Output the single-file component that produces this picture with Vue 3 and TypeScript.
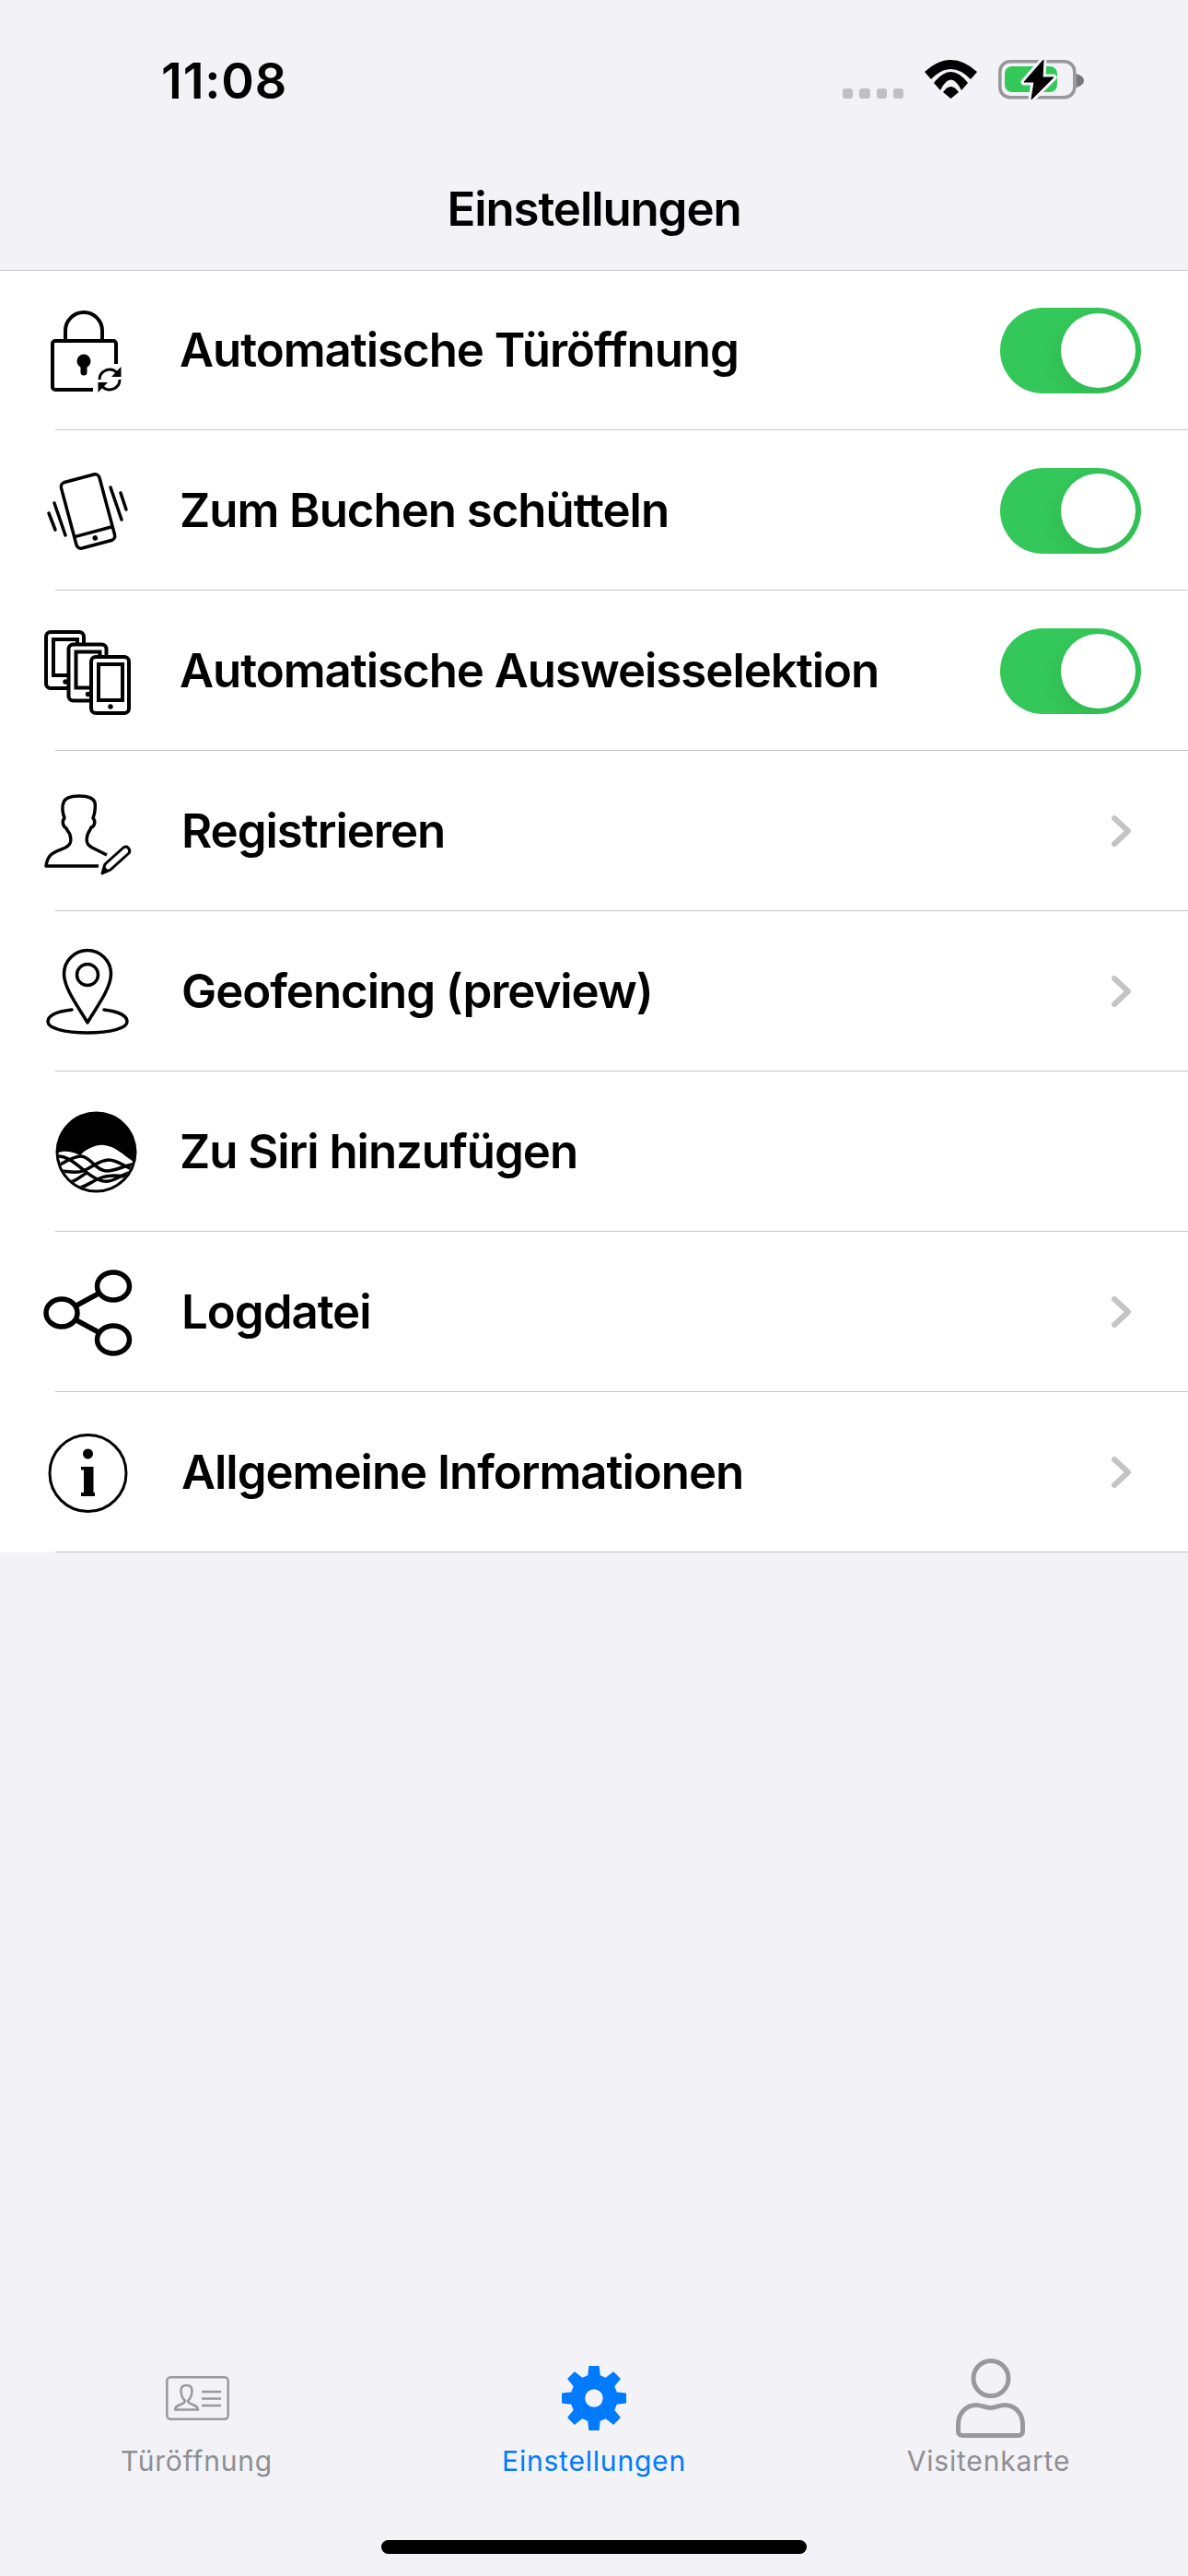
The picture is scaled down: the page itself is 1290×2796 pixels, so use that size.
<script setup lang="ts">
type RowKind = "switch" | "link" | "plain";

interface SettingRow {
  label: string;
  icon: string;
  kind: RowKind;
}

const rows: SettingRow[] = [
  { label: "Automatische Türöffnung", icon: "lock", kind: "switch" },
  { label: "Zum Buchen schütteln", icon: "shake", kind: "switch" },
  { label: "Automatische Ausweisselektion", icon: "cards", kind: "switch" },
  { label: "Registrieren", icon: "register", kind: "link" },
  { label: "Geofencing (preview)", icon: "pin", kind: "link" },
  { label: "Zu Siri hinzufügen", icon: "siri", kind: "plain" },
  { label: "Logdatei", icon: "share", kind: "link" },
  { label: "Allgemeine Informationen", icon: "info", kind: "link" },
];

// three overlapping phones, each one shifted down and right
const phoneOffsets = [
  { x: 0, y: 0 },
  { x: 24.5, y: 13.5 },
  { x: 49, y: 27 },
];

const buildGear = (cx: number, cy: number) => {
  const teeth = 8;
  const parts: string[] = [];
  const point = (r: number, deg: number) => {
    const a = (deg * Math.PI) / 180;
    return `${(cx + r * Math.sin(a)).toFixed(2)} ${(cy - r * Math.cos(a)).toFixed(2)}`;
  };
  for (let i = 0; i < teeth; i++) {
    const mid = (i * 360) / teeth;
    parts.push(
      `${i === 0 ? "M" : "L"}${point(25, mid - 14)}`,
      `L${point(35, mid - 8)}`,
      `L${point(35, mid + 8)}`,
      `L${point(25, mid + 14)}`,
    );
  }
  parts.push("Z");
  // centre hole
  parts.push(`M${cx - 10.5} ${cy}a10.5 10.5 0 1 0 21 0a10.5 10.5 0 1 0 -21 0Z`);
  return parts.join(" ");
};

const gearPath = buildGear(35, 35);
</script>

<template>
  <div class="page">
    <header class="top">
      <div class="status">
        <span class="time">11:08</span>
        <div class="status-icons">
          <div class="signal">
            <i v-for="n in 4" :key="n"></i>
          </div>
          <svg width="57" height="42" viewBox="0 0 57 42">
            <path d="M0 13Q28.500 -13 57 13L50 21Q28.500 -1 7 21Z" />
            <path d="M10 25Q28.500 1 47 25L40 33Q28.500 10 17 33Z" />
            <path d="M20 35Q28.500 23 37 35L28.500 42Z" />
          </svg>
          <svg class="battery" width="93" height="46" viewBox="0 0 93 46">
            <rect x="1.800" y="3.800" width="81" height="39" rx="11" fill="none" stroke="#98989c" stroke-width="3.500" />
            <rect x="7" y="9" width="57" height="28" rx="8" fill="#34c759" />
            <path d="M84.500 17C88 18 93 20 93 24.500C93 29 88 31 84.500 32Z" fill="#77777b" />
            <path d="M49 2L28 26H39L36 45L60 21H48Z" stroke="#f2f2f7" stroke-width="7" stroke-linejoin="round" />
            <path d="M49 2L28 26H39L36 45L60 21H48Z" fill="#000" stroke="#000" stroke-width="1" stroke-linejoin="round" />
          </svg>
        </div>
      </div>
      <h1 class="title">Einstellungen</h1>
    </header>

    <section class="list">
      <div v-for="row in rows" :key="row.label" class="row">
        <svg class="row-icon" width="196" height="174" viewBox="0 0 196 174">
          <g v-if="row.icon === 'lock'" class="line" stroke-width="4">
            <path d="M101 130H60a3 3 0 0 1-3-3V80a3 3 0 0 1 3-3H123a3 3 0 0 1 3 3V102" />
            <path d="M71 76V66a20 20 0 0 1 40 0V76" />
            <circle cx="91" cy="99" r="5.500" class="solid" />
            <path d="M91 100V111" stroke-width="7" stroke-linecap="round" />
            <g stroke-width="3">
              <path d="M108 119A11 11 0 0 1 127 111.500" />
              <path d="M130 119A11 11 0 0 1 111 126.500" />
            </g>
            <path d="M131.500 105V116H121Z" class="solid" stroke="none" />
            <path d="M106.500 133V122H117Z" class="solid" stroke="none" />
          </g>

          <g v-else-if="row.icon === 'shake'" class="line" stroke-width="3.500">
            <g transform="translate(95.500 88) rotate(-15)">
              <rect x="-21.500" y="-37" width="43" height="74" rx="5" />
              <path d="M-21 23H21" />
              <circle cx="0" cy="30" r="2.800" class="solid" stroke="none" />
            </g>
            <path d="M59 79L71 114M53 90L60 108M120 62L132 97M131 68L137 86" stroke-linecap="round" />
          </g>

          <g v-else-if="row.icon === 'cards'" class="line" stroke-width="4">
            <g v-for="(o, i) in phoneOffsets" :key="i" :transform="`translate(${o.x} ${o.y})`">
              <rect x="50" y="45" width="41" height="61" rx="5" fill="#fff" />
              <rect x="58" y="53" width="26" height="39" />
              <circle cx="71" cy="99" r="2.700" class="solid" stroke="none" />
            </g>
          </g>

          <g v-else-if="row.icon === 'register'" class="line" stroke-width="3.500" stroke-linejoin="round">
            <path
              d="M116 113L100 105C94 102 93 98 95 91C96 88 98 86 99 83C103 82 104 76 101 73C103 68 104 60 103 56C101 50 92 49 86 49C80 49 71 50 69 56C67 60 68 68 70 73C67 76 68 82 72 84C73 87 75 88 76 91C78 98 77 102 71 105C60 110 52 110 50 125H107"
            />
            <path d="M111 133L114 123L134 105Q137 103 139 105Q142 108 140 111L120 129Z" stroke-width="3" />
            <path d="M110 134L113 125L119 131Z" class="solid" stroke="none" />
          </g>

          <g v-else-if="row.icon === 'pin'" class="line" stroke-width="3.500">
            <path d="M95 121C88 108 69.500 85 69.500 68A25.500 25.500 0 0 1 120.500 68C120.500 85 102 108 95 121Z" stroke-linejoin="round" />
            <circle cx="95" cy="69" r="11.500" />
            <path
              d="M78 107C60 109 52 114 52 120C52 127 70 132 95 132C120 132 138 127 138 120C138 114 130 109 113 107"
              stroke-linecap="round"
            />
          </g>

          <g v-else-if="row.icon === 'siri'">
            <defs>
              <clipPath id="siri-clip">
                <circle cx="104.500" cy="87.500" r="41" />
              </clipPath>
            </defs>
            <circle cx="104.500" cy="87.500" r="44" fill="#000" />
            <g clip-path="url(#siri-clip)">
              <path d="M60 90C65 86 75 85 87 91C95 83 105 79 113 80C125 81 133 90 148 100V135H58Z" fill="#fff" />
              <g class="line" stroke-width="3.500">
                <path d="M58 105C68 100 78 92 88 92C98 92 104 108 116 108C126 108 134 102 148 100" />
                <path d="M58 92C72 90 82 100 92 108C102 116 112 122 122 118C132 114 140 108 148 108" />
                <path d="M58 108C68 106 80 112 90 108C100 104 108 96 118 96C128 96 136 104 148 108" />
                <path d="M66 118C78 124 84 116 94 110" />
                <path d="M78 128C90 128 98 120 108 116C118 112 130 112 146 116" />
              </g>
            </g>
          </g>

          <g v-else-if="row.icon === 'share'" class="line" stroke-width="5.500">
            <ellipse cx="123" cy="59" rx="17.500" ry="15" />
            <ellipse cx="67" cy="88" rx="17" ry="15" />
            <ellipse cx="123" cy="117" rx="17.500" ry="15" />
            <path d="M83 80L107 67M83 96L107 109" />
          </g>

          <g v-else-if="row.icon === 'info'">
            <circle cx="95.500" cy="88" r="41.500" class="line" stroke-width="3" />
            <circle cx="95.500" cy="67" r="5.500" />
            <path d="M88 81H101.500V109H103V113H88V109H91V84.500H88Z" />
          </g>
        </svg>

        <span class="row-label" :class="{ 'row-label--link': row.kind === 'link' }">{{ row.label }}</span>

        <div v-if="row.kind === 'switch'" class="switch">
          <div class="switch-knob"></div>
        </div>
        <svg v-else-if="row.kind === 'link'" class="chevron" width="23" height="36" viewBox="0 0 23 36">
          <path d="M4 4L19 18L4 32" />
        </svg>
      </div>
    </section>

    <nav class="tabs">
      <div class="tab-row">
        <div class="tab">
          <div class="tab-icon">
            <svg width="69" height="48" viewBox="0 0 69 48" class="tab-line card-icon" stroke-width="2.500">
              <rect x="1.300" y="1.300" width="66.400" height="45.400" rx="4" />
              <path d="M39 17H60M39 24.500H60M39 32H60" />
              <path d="M10 36.500C10 30 20 32 21 27C18 24 16.500 20 16.500 16C16.500 12 19 10 22.500 10C26 10 28.500 12 28.500 16C28.500 20 27 24 24 27C25 32 35 30 35 36.500Z" stroke-linejoin="round" />
            </svg>
          </div>
          <span class="tab-label">Türöffnung</span>
        </div>
        <div class="tab tab--active">
          <div class="tab-icon">
            <svg width="70" height="70" viewBox="0 0 70 70">
              <path :d="gearPath" fill="#007aff" fill-rule="evenodd" stroke="#007aff" stroke-width="1.500" stroke-linejoin="round" />
            </svg>
          </div>
          <span class="tab-label">Einstellungen</span>
        </div>
        <div class="tab">
          <div class="tab-icon">
            <svg width="75" height="86" viewBox="0 0 75 86" class="tab-line" stroke-width="5">
              <circle cx="38" cy="21.500" r="19" />
              <path d="M7 83.500H68a4.500 4.500 0 0 0 4.500-4.500V72C72.500 58 63 50.500 53 50.500C47 50.500 44 53.500 37.500 53.500C31 53.500 28 50.500 22 50.500C12 50.500 2.500 58 2.500 72V79a4.500 4.500 0 0 0 4.500 4.500Z" />
            </svg>
          </div>
          <span class="tab-label">Visitenkarte</span>
        </div>
      </div>
      <div class="home-bar"></div>
    </nav>
  </div>
</template>

<style>
html,
body {
  margin: 0;
  background: #f2f2f7;
}
</style>

<style scoped>
.page {
  display: flex;
  flex-direction: column;
  min-height: 2796px;
  background: #f2f2f7;
  color: #000;
  font-family: Inter, "Liberation Sans", sans-serif;
}
.top {
  height: 293px;
}
.status {
  display: flex;
  justify-content: space-between;
  padding: 55px 113px 0 175px;
}
.time {
  font-size: 54px;
  font-weight: 600;
  line-height: 65px;
  letter-spacing: 0.800px;
}
.status-icons {
  display: flex;
  align-items: flex-end;
  gap: 23px;
  height: 52px;
}
.battery {
  margin-bottom: -2px;
}
.signal {
  display: flex;
  gap: 7px;
}
.signal i {
  display: block;
  width: 11.200px;
  height: 11px;
  border-radius: 3px;
  background: #c0bfc5;
}
.title {
  margin: 76px 0 0;
  font-size: 51px;
  font-weight: 600;
  line-height: 62px;
  letter-spacing: -1.100px;
  text-align: center;
}
.list {
  background: #fff;
  box-shadow: inset 0 1px 0 #c6c6c8;
}
.row {
  position: relative;
  display: flex;
  align-items: center;
  height: 174px;
}
.row::after {
  content: "";
  position: absolute;
  left: 60px;
  right: 0;
  bottom: 0;
  height: 1px;
  background: #c6c6c8;
}
.row-icon {
  flex-shrink: 0;
}
.row-label {
  flex: 1;
  margin-left: -1px;
  font-size: 51px;
  font-weight: 600;
  line-height: 62px;
  letter-spacing: -1.050px;
  white-space: nowrap;
}
.row-label--link {
  padding-left: 2px;
}
.line {
  fill: none;
  stroke: #000;
}
.solid {
  fill: #000;
}
.switch {
  display: flex;
  justify-content: flex-end;
  align-items: center;
  width: 153px;
  height: 93px;
  margin-right: 51px;
  padding-right: 6px;
  box-sizing: border-box;
  border-radius: 47px;
  background: #34c759;
  overflow: hidden;
}
.switch-knob {
  width: 81px;
  height: 81px;
  border-radius: 50%;
  background: #fff;
  box-shadow: 0 9px 24px rgba(0, 0, 0, 0.08);
}
.chevron {
  margin-right: 61px;
  fill: none;
  stroke: #c4c4c7;
  stroke-width: 6;
  stroke-linecap: round;
  stroke-linejoin: round;
}
.tabs {
  margin-top: auto;
}
.tab-row {
  display: grid;
  grid-template-columns: repeat(3, 1fr);
}
.tab {
  display: flex;
  flex-direction: column;
  align-items: center;
  color: #8e8e93;
}
.tab--active {
  color: #007aff;
}
.tab-icon {
  display: flex;
  justify-content: center;
  align-items: center;
  height: 100px;
}
.tab-line {
  fill: none;
  stroke: #98989d;
}
.card-icon {
  margin-left: -2px;
}
.tab-label {
  font-size: 30px;
  line-height: 36px;
  letter-spacing: 0.800px;
}
.tab:not(.tab--active) .tab-label {
  margin-left: -3px;
}
.home-bar {
  width: 462px;
  height: 15px;
  margin: 68px auto 24px;
  border-radius: 8px;
  background: #000;
}
</style>
